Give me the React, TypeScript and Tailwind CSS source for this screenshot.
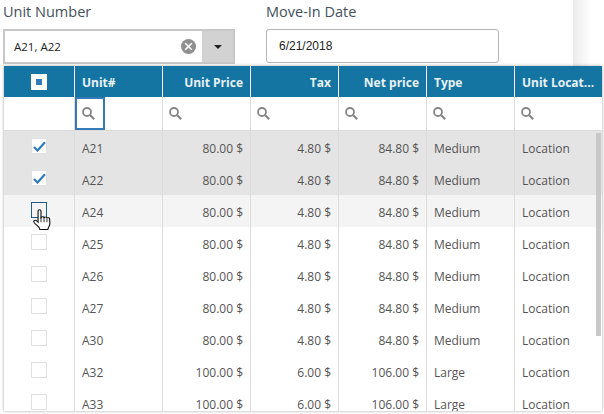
const rows = [
  { unit: 'A21', price: '80.00 $', tax: '4.80 $', net: '84.80 $', type: 'Medium', checked: true },
  { unit: 'A22', price: '80.00 $', tax: '4.80 $', net: '84.80 $', type: 'Medium', checked: true },
  { unit: 'A24', price: '80.00 $', tax: '4.80 $', net: '84.80 $', type: 'Medium', hover: true },
  { unit: 'A25', price: '80.00 $', tax: '4.80 $', net: '84.80 $', type: 'Medium' },
  { unit: 'A26', price: '80.00 $', tax: '4.80 $', net: '84.80 $', type: 'Medium' },
  { unit: 'A27', price: '80.00 $', tax: '4.80 $', net: '84.80 $', type: 'Medium' },
  { unit: 'A30', price: '80.00 $', tax: '4.80 $', net: '84.80 $', type: 'Medium' },
  { unit: 'A32', price: '100.00 $', tax: '6.00 $', net: '106.00 $', type: 'Large' },
  { unit: 'A33', price: '100.00 $', tax: '6.00 $', net: '106.00 $', type: 'Large' },
];

const cols = 'grid grid-cols-[71px_88px_88px_88px_88px_88px_87px]';

function SearchIcon() {
  return (
    <svg width="13" height="13" viewBox="0 0 13 13" fill="none" stroke="#858585">
      <circle cx="5" cy="5" r="4" strokeWidth="1.8" />
      <path d="M8 8l4.2 4.2" strokeWidth="2.2" />
    </svg>
  );
}

function FilterCell({ focused }: { focused?: boolean }) {
  return (
    <div className="flex h-[33px] border-r border-[#dcdcdc] last:border-r-0">
      <div
        className={`flex h-[33px] items-center ${
          focused ? 'w-[30px] border-2 border-[#337ab7] pl-[5px]' : 'pl-[6px]'
        }`}
      >
        <SearchIcon />
      </div>
    </div>
  );
}

function Hand() {
  return (
    <svg
      width="18"
      height="23"
      viewBox="1.5 0.5 16 23.5"
      preserveAspectRatio="none"
      className="absolute left-[29px] top-[14px]"
    >
      <path
        d="M6 2.5c0-1.6 2.6-1.6 2.6 0v6.6c.5-.9 2.4-.9 2.7.2.6-.8 2.3-.7 2.6.4.8-.6 2.3-.3 2.4 1l.2 4.8c0 1.6-.8 2.9-1.4 4.3l-.4 1.7H7.6l-.5-1.7c-1.2-1.8-3.2-3.6-4.6-5.6-.9-1.4.7-2.9 2.2-1.7L6 14V2.5z"
        fill="#fff"
        stroke="#111"
        strokeWidth="1"
      />
      <path d="M8.6 9v5M11.3 9.5V14M13.9 10.5V14" stroke="#111" strokeWidth="0.8" fill="none" />
    </svg>
  );
}

export default function App() {
  return (
    <div className="h-[414px] w-[604px] overflow-hidden bg-white font-['Open_Sans',sans-serif]">
      <div className="flex h-[66px]">
        <div className="flex w-[573px]">
          <div className="ml-[3px] w-[263px]">
            <div className="h-[24px] pt-[1px] text-[14.5px] leading-[22px] text-[#44505c]">Unit Number</div>
            <div className="mt-[5px] flex h-[35px] w-[232px] border-2 border-[#c8c8c8] bg-white pl-[1px]">
              <div className="flex flex-1 items-center justify-between pl-[8px] pr-[6px] text-[11.5px] text-[#222]">
                <span>A21, A22</span>
                <span className="flex h-[15px] w-[15px] items-center justify-center rounded-full bg-[#8f8f8f]">
                  <svg width="9" height="9" viewBox="0 0 9 9">
                    <path d="M1.2 1.2l6.6 6.6M7.8 1.2L1.2 7.8" stroke="#fff" strokeWidth="1.6" />
                  </svg>
                </span>
              </div>
              <div className="flex w-[31px] items-center justify-center bg-[#d2d2d2]">
                <div className="h-0 w-0 border-x-[4px] border-t-[4px] border-x-transparent border-t-[#222]" />
              </div>
            </div>
          </div>
          <div className="w-[233px]">
            <div className="h-[24px] pt-[1px] text-[14.5px] leading-[22px] text-[#44505c]">Move-In Date</div>
            <div className="mt-[5px] flex h-[34px] items-center rounded-[3px] border border-[#b5b5b5] pl-[12px] font-['Liberation_Sans',sans-serif] text-[12px] text-[#222]">
              6/21/2018
            </div>
          </div>
        </div>
        <div className="w-[18px] bg-linear-to-r from-[#ebebeb] to-white" />
      </div>

      <div className="relative ml-[4px] h-[345px] w-[598px] overflow-hidden bg-white shadow-[0_0_3px_rgba(0,0,0,0.35)]">
        <div className={`${cols} h-[31px] bg-[#1475a3] text-[12px] font-bold text-[#e8f1f6]`}>
          <div className="flex items-center justify-center border-r border-white">
            <div className="flex h-[16px] w-[16px] items-center justify-center bg-white">
              <div className="h-[6px] w-[6px] bg-[#337ab7]" />
            </div>
          </div>
          <div className="flex items-center border-r border-white pl-[7px] pt-[2px]">Unit#</div>
          <div className="flex items-center justify-end border-r border-white pr-[7px] pt-[2px]">Unit Price</div>
          <div className="flex items-center justify-end border-r border-white pr-[7px] pt-[2px]">Tax</div>
          <div className="flex items-center justify-end border-r border-white pr-[7px] pt-[2px]">Net price</div>
          <div className="flex items-center border-r border-white pl-[7px] pt-[2px]">Type</div>
          <div className="flex items-center pl-[7px] pt-[2px]">Unit Locat...</div>
        </div>

        <div className={`${cols} border-b border-[#dcdcdc]`}>
          <div className="h-[33px] border-r border-[#dcdcdc]" />
          <FilterCell focused />
          <FilterCell />
          <FilterCell />
          <FilterCell />
          <FilterCell />
          <FilterCell />
        </div>

        {rows.map((r) => (
          <div
            key={r.unit}
            className={`${cols} h-[32px] text-[12px] text-[#555] ${
              r.checked ? 'bg-[#e4e4e4]' : r.hover ? 'bg-[#f4f4f4]' : 'bg-white'
            }`}
          >
            <div className="relative flex items-center justify-center border-r border-[#dcdcdc] pb-[2px]">
              <div
                className={`flex h-[16px] w-[16px] items-center justify-center ${
                  r.hover ? 'border-[1.5px] border-[#1d5f8a]' : 'border border-[#e0e0e0]'
                } ${r.checked ? 'bg-white' : ''}`}
              >
                {r.checked && (
                  <svg width="13" height="11" viewBox="0 0 13 11" fill="none">
                    <path d="M1 6l3.5 3.5L12 1.2" stroke="#337ab7" strokeWidth="2.2" />
                  </svg>
                )}
              </div>
              {r.hover && <Hand />}
            </div>
            <div className="flex items-center border-r border-[#dcdcdc] pl-[7px] pt-[4px]">{r.unit}</div>
            <div className="flex items-center justify-end border-r border-[#dcdcdc] pr-[7px] pt-[4px]">{r.price}</div>
            <div className="flex items-center justify-end border-r border-[#dcdcdc] pr-[7px] pt-[4px]">{r.tax}</div>
            <div className="flex items-center justify-end border-r border-[#dcdcdc] pr-[7px] pt-[4px]">{r.net}</div>
            <div className="flex items-center border-r border-[#dcdcdc] pl-[7px] pt-[4px]">{r.type}</div>
            <div className="flex items-center pl-[7px] pt-[4px]">Location</div>
          </div>
        ))}

        <div className="absolute right-[1px] top-[67px] h-[203px] w-[5px] bg-[#c8c8c8]" />
      </div>
    </div>
  );
}
